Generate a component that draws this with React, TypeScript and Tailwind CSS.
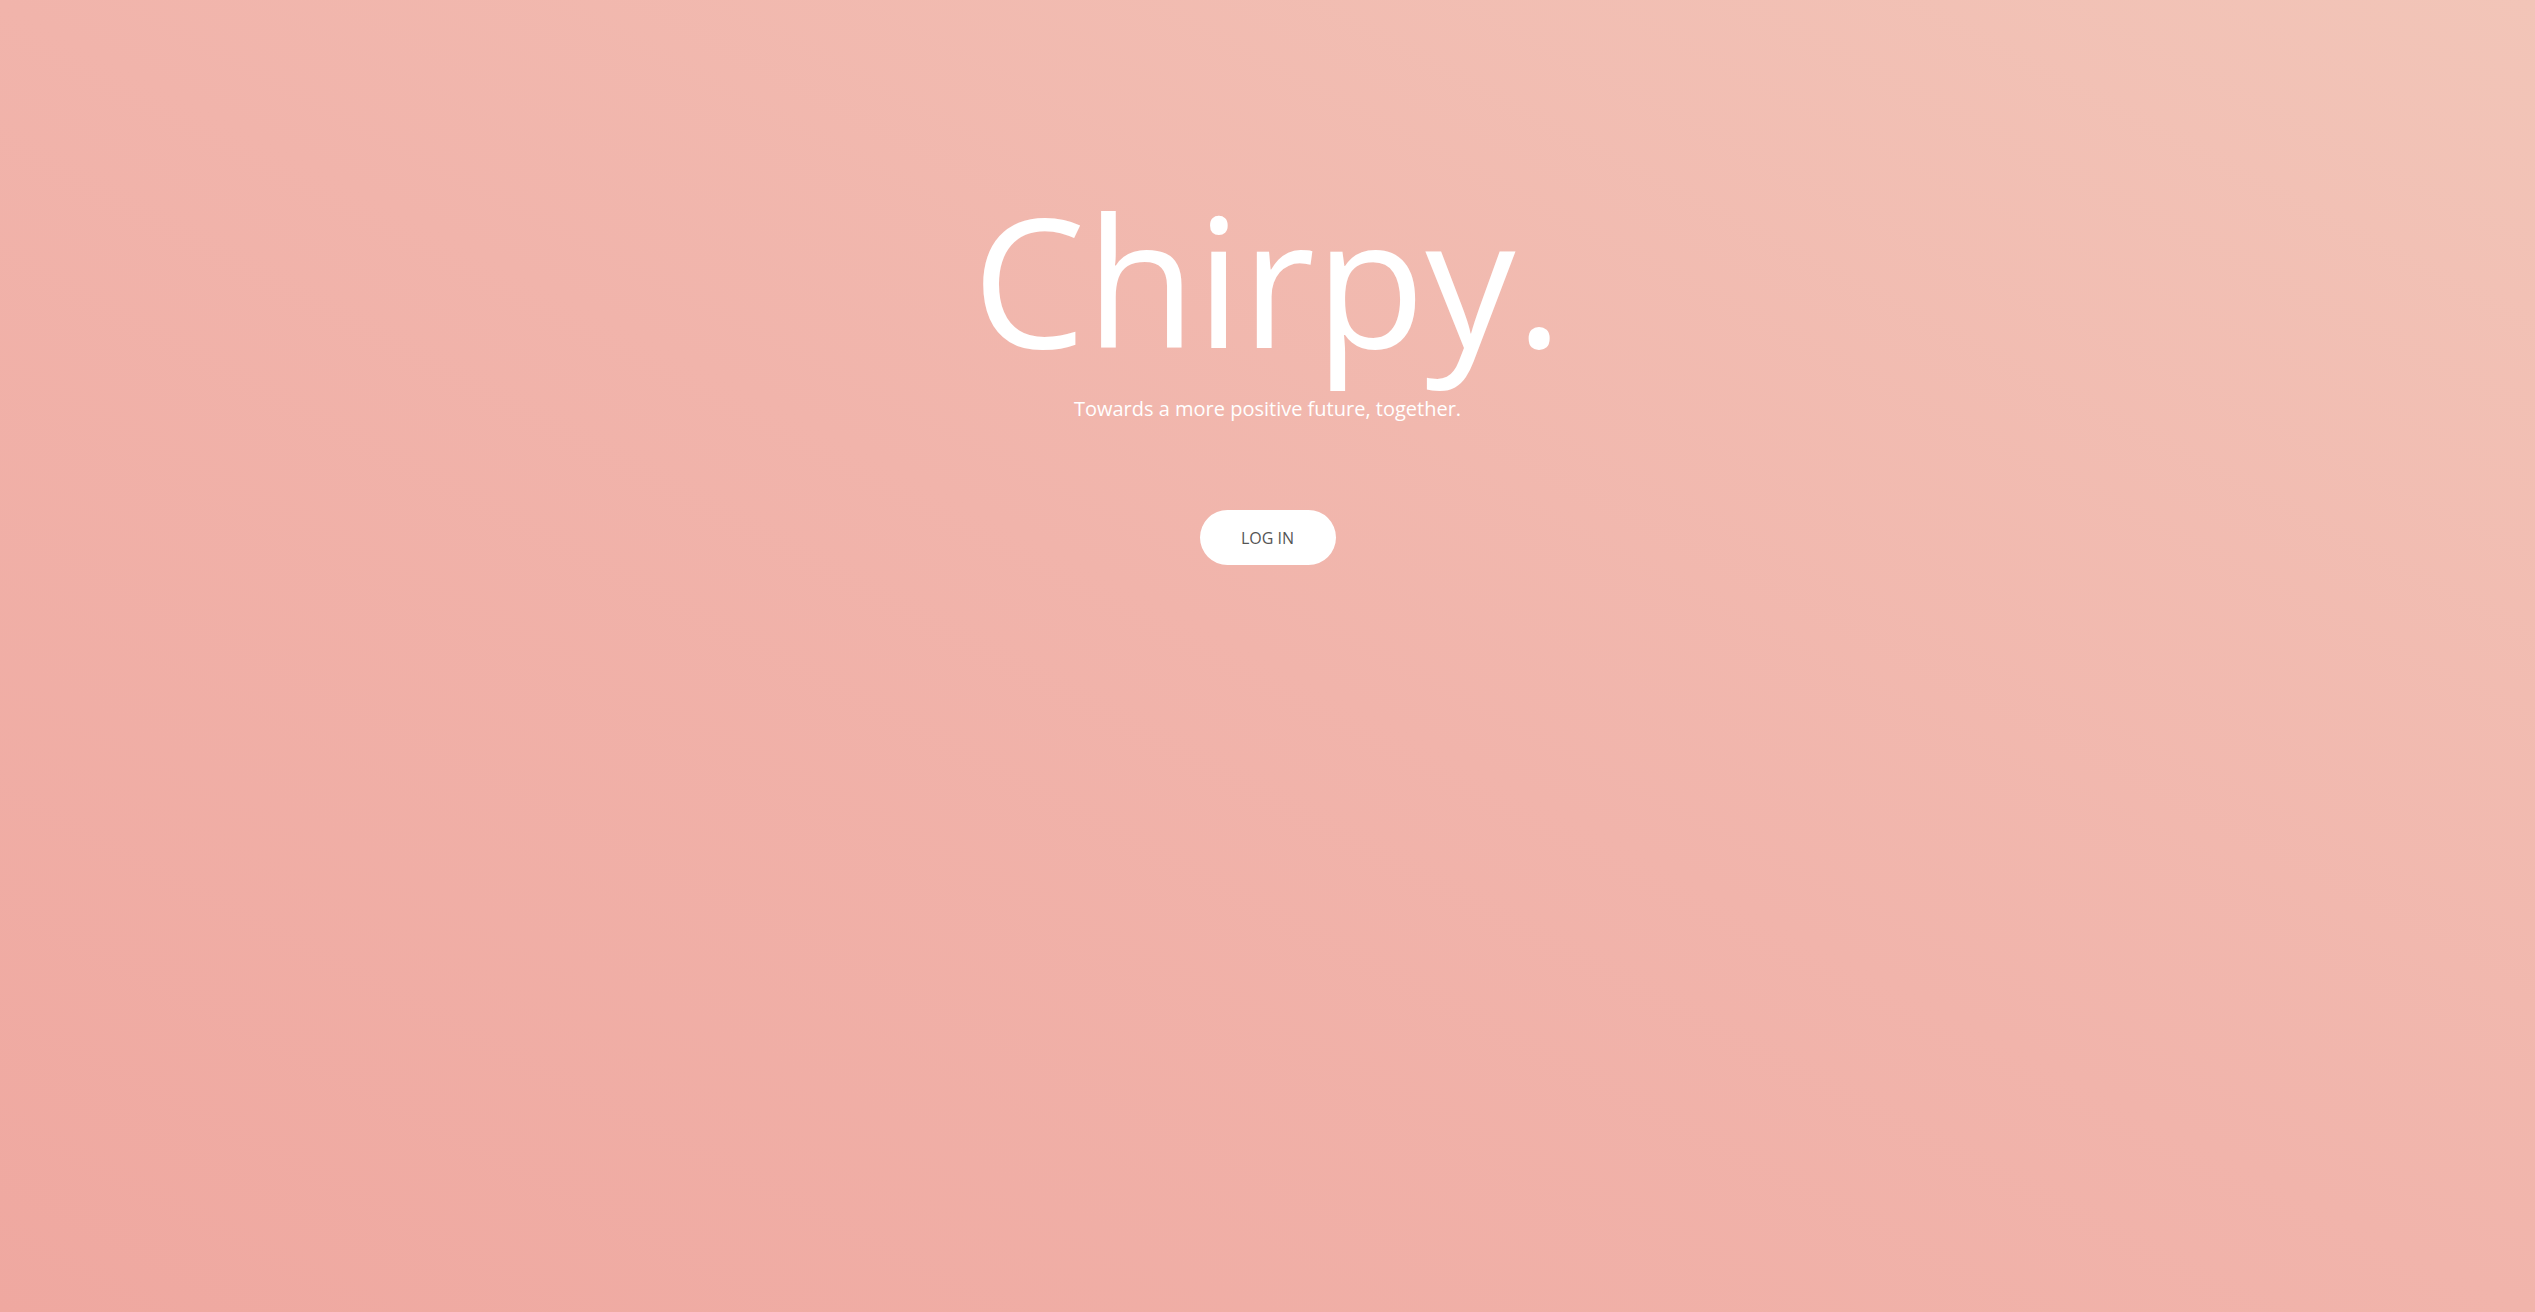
export default function App() {
  return (
    <div
      className="min-h-screen w-full flex flex-col items-center pt-[189px] bg-gradient-to-tr from-[#efa8a0] via-[#f1b4ab] to-[#f2c5b8] text-white"
      style={{ fontFamily: '"Open Sans", sans-serif' }}
    >
      {/* Title */}
      <h1 className="text-[180px] leading-none font-normal">Chirpy.</h1>
      <p className="mt-[30px] text-[20px] leading-none">
        Towards a more positive future, together.
      </p>

      {/* Action */}
      <button className="mt-[91px] h-[55px] w-[136px] rounded-full bg-white text-[16px] text-[#555555] uppercase">
        Log in
      </button>
    </div>
  );
}
